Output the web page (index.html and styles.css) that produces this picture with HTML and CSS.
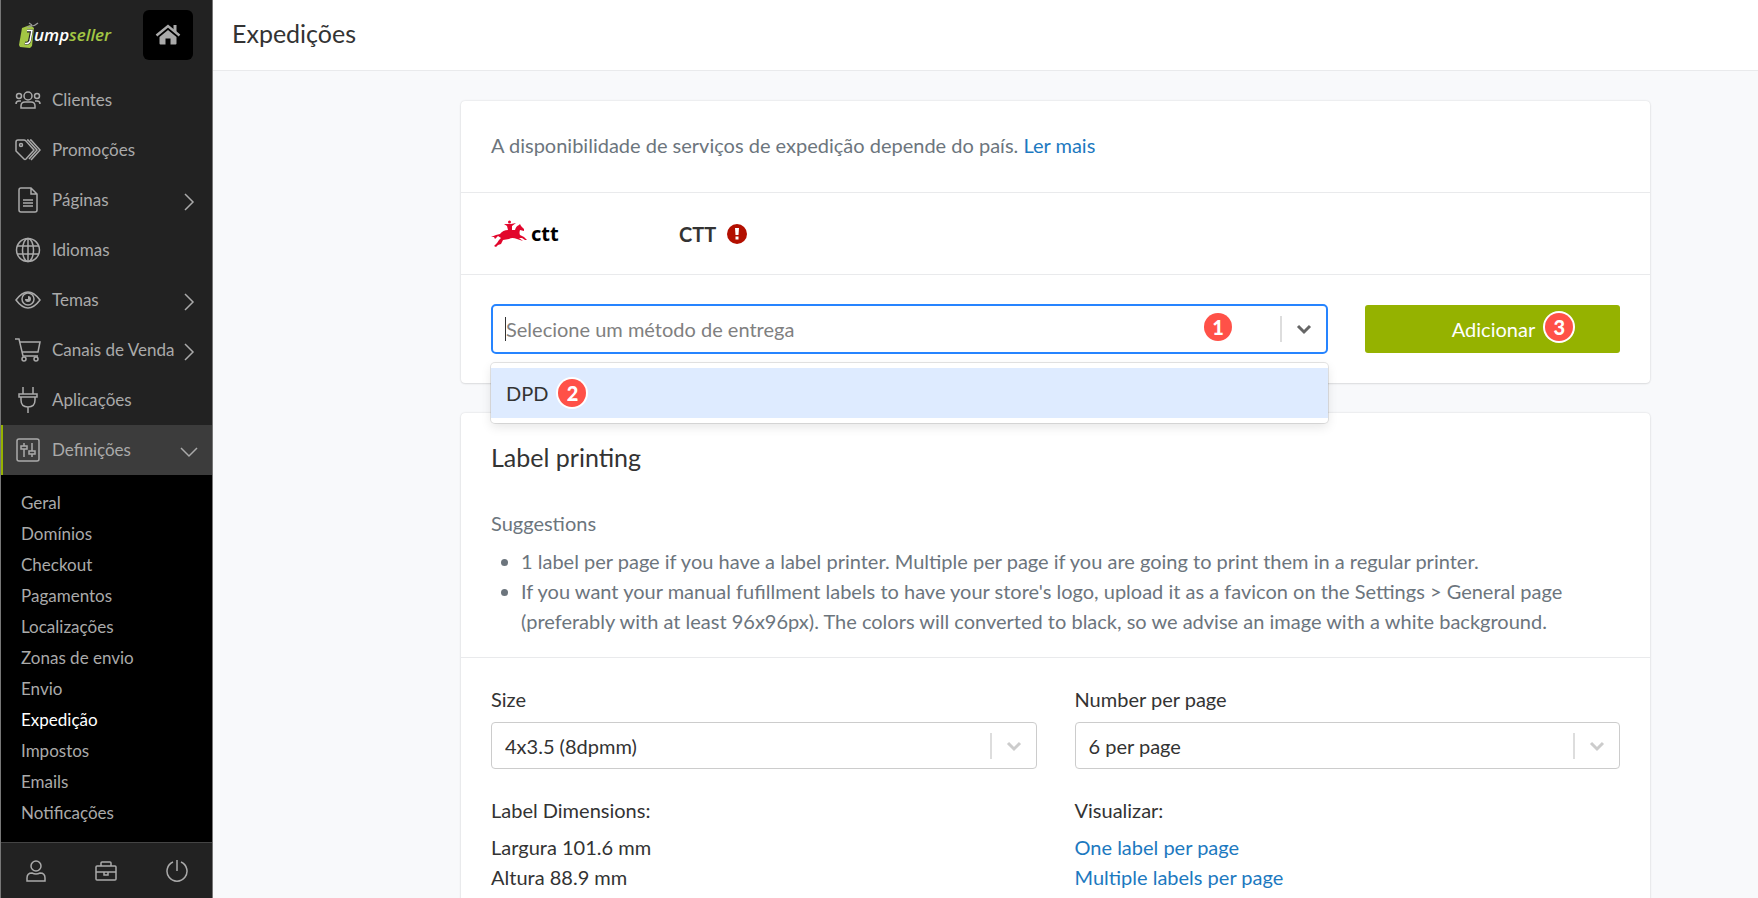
FILE: index.html
```html
<!DOCTYPE html>
<html lang="pt">

<head>
  <meta charset="UTF-8">
  <meta name="viewport" content="width=device-width, initial-scale=1.0">
  <title>Expedições</title>
  <link rel="stylesheet" href="styles.css">
</head>

<body>
  <!-- Sidebar -->
  <aside class="sidebar">
    <div class="sidebar-top">
      <a class="logo" href="#" aria-label="jumpseller">
        <svg class="logo-mark" viewBox="0 0 20 26" width="20" height="26" aria-hidden="true">
          <path d="M3 6 L11 3 L15 6 L13 24 L11 26 L1 25 L0 23 Z" fill="#a3c644"/>
          <path d="M8 9 H12.500 L10.500 19 Q9.500 22 6 21" fill="none" stroke="#222" stroke-width="3"/>
          <path d="M8 8.500 H13 L11 19 Q10 22 6 21.500" fill="none" stroke="#fff" stroke-width="1.500"/>
          <path d="M8 5 Q12 5 13 3 M12 4 Q16 4 19 1 M10 1 L13 3" fill="none" stroke="#999" stroke-width="1.200"/>
        </svg>
        <span class="logo-text">ump<b>seller</b></span>
      </a>
      <a class="home-btn" href="#" aria-label="Início">
        <svg viewBox="0 0 26 22" width="26" height="22" fill="#aaa">
          <path d="M13 6 L4.500 13 V19.500 Q4.500 20.500 5.500 20.500 H10.500 V14.500 H15.500 V20.500 H20.500 Q21.500 20.500 21.500 19.500 V13 Z"/>
          <path d="M1.500 11.500 L13 2 L24.500 11.500" fill="none" stroke="#aaa" stroke-width="2.500"/>
          <path d="M18.500 1 H21.500 V8.500 L18.500 6 Z"/>
        </svg>
      </a>
    </div>

    <nav class="menu">
      <a class="menu-item" href="#">
        <svg class="icon" viewBox="0 0 26 26">
          <circle cx="13" cy="9" r="4"/><circle cx="4" cy="9" r="2.500"/><circle cx="22" cy="9" r="2.500"/>
          <path d="M6 21 V19 Q6 15 10 15 H16 Q20 15 20 19 V21 H6 Z M1 17 Q1 14 4 14 H6 M25 17 Q25 14 22 14 H20"/>
        </svg>
        <span>Clientes</span>
      </a>
      <a class="menu-item" href="#">
        <svg class="icon" viewBox="0 0 26 26">
          <path d="M1 5 Q1 3 3 3 H9 Q10 3 11 4 L19 13 L11 22 Q10 23 9 22 L1 14 Z M12 3 H13 L22 13 L14 22 M15 3 H16 L25 13 L16 23"/><circle cx="6" cy="8" r="1.500"/>
        </svg>
        <span>Promoções</span>
      </a>
      <a class="menu-item" href="#">
        <svg class="icon" viewBox="0 0 26 26">
          <path d="M4 3 Q4 1 6 1 H16 L22 7 V23 Q22 25 20 25 H6 Q4 25 4 23 Z M16 1 V7 H22 M8 13 H18 M8 16 H18 M8 19 H18"/>
        </svg>
        <span>Páginas</span>
        <svg class="chevron" viewBox="0 0 18 18"><path d="M5 1 L13 9 L5 17"/></svg>
      </a>
      <a class="menu-item" href="#">
        <svg class="icon" viewBox="0 0 26 26">
          <circle cx="13" cy="13" r="11.500"/><ellipse cx="13" cy="13" rx="5.500" ry="11.500"/>
          <path d="M13 1 V25 M2 9 H24 M2 17 H24"/>
        </svg>
        <span>Idiomas</span>
      </a>
      <a class="menu-item" href="#">
        <svg class="icon" viewBox="0 0 26 26">
          <path d="M1 13 Q13 -3 25 13 Q13 29 1 13 Z"/><circle cx="13" cy="12" r="6"/>
          <path d="M13 9 A3 3 0 1 1 10 12 H13 Z" fill="#aaa" stroke="none"/>
        </svg>
        <span>Temas</span>
        <svg class="chevron" viewBox="0 0 18 18"><path d="M5 1 L13 9 L5 17"/></svg>
      </a>
      <a class="menu-item" href="#">
        <svg class="icon" viewBox="0 0 26 26">
          <path d="M0 2 H4 L8 19 H23 M5 5 H25 L23 15 H7"/><circle cx="9" cy="22" r="2"/><circle cx="21" cy="22" r="2"/>
        </svg>
        <span>Canais de Venda</span>
        <svg class="chevron" viewBox="0 0 18 18"><path d="M5 1 L13 9 L5 17"/></svg>
      </a>
      <a class="menu-item" href="#">
        <svg class="icon" viewBox="0 0 26 26">
          <path d="M8 0 V7 M18 0 V7 M4 7 H22 V10 H4 Z M6 10 V13 Q6 20 13 20 Q20 20 20 13 V10 M13 20 V26"/>
        </svg>
        <span>Aplicações</span>
      </a>
      <a class="menu-item menu-open" href="#">
        <svg class="icon" viewBox="0 0 26 26">
          <rect x="2" y="2" width="22" height="22" rx="2"/>
          <path d="M9 6 V9 M9 12 V20 M6 9 H12 V12 H6 Z M17 6 V14 M14 14 H20 V17 H14 Z M17 17 V20"/>
        </svg>
        <span>Definições</span>
        <svg class="chevron" viewBox="0 0 18 18"><path d="M1 5 L9 13 L17 5"/></svg>
      </a>
    </nav>

    <ul class="submenu">
      <li><a href="#">Geral</a></li>
      <li><a href="#">Domínios</a></li>
      <li><a href="#">Checkout</a></li>
      <li><a href="#">Pagamentos</a></li>
      <li><a href="#">Localizações</a></li>
      <li><a href="#">Zonas de envio</a></li>
      <li><a href="#">Envio</a></li>
      <li><a class="active" href="#">Expedição</a></li>
      <li><a href="#">Impostos</a></li>
      <li><a href="#">Emails</a></li>
      <li><a href="#">Notificações</a></li>
    </ul>

    <div class="sidebar-bottom">
      <button type="button" aria-label="Conta">
        <svg class="tool" viewBox="0 0 22 22"><circle cx="11" cy="6" r="5"/><path d="M2 21 V18 Q2 13 7 13 Q11 15 15 13 Q20 13 20 18 V21 Z"/></svg>
      </button>
      <button type="button" aria-label="Ferramentas">
        <svg class="tool" viewBox="0 0 22 22"><rect x="1" y="6" width="20" height="14" rx="1"/><path d="M6 6 V3 Q6 2 7 2 H15 Q16 2 16 3 V6 M1 12 H21 M9 12 V15 H13 V12"/></svg>
      </button>
      <button type="button" aria-label="Sair">
        <svg class="tool" viewBox="0 0 22 22"><path d="M11 0 V11 M7 2 A10 10 0 1 0 15 2"/></svg>
      </button>
    </div>
  </aside>

  <!-- Page -->
  <div class="page">
    <header class="page-header">
      <h1>Expedições</h1>
    </header>

    <div class="page-body">
      <main class="content">
        <section class="card">
          <div class="card-row intro">
            <p>A disponibilidade de serviços de expedição depende do país. <a href="#">Ler mais</a></p>
          </div>

          <div class="card-row carrier">
            <div class="carrier-logo">
              <svg viewBox="0 0 36 28" width="36" height="28" fill="#e2062c" aria-hidden="true">
                <circle cx="18.500" cy="2" r="1.500"/>
                <path d="M13 4 L17 4 L20 4 L25 3 L21 6 L21 10 L24 10 Q25 6 28 5 L29 4 L30 6 L33 9 L33 11 L29 10 Q28 13 29 15 L33 17 L36 20 L34 20 L31 18 L28 18 L32 21 L26 19 Q21 17 18 19 L12 20 L10 24 L7 25 L5 27 L3 26 L6 23 L8 20 L10 18 L7 16 L4 19 L3 17 L0 17 L5 15 L9 14 Q12 10 17 10 L16 6 Z"/>
              </svg>
              <span>ctt</span>
            </div>
            <strong class="carrier-name">CTT</strong>
            <svg class="alert" viewBox="0 0 20 20" width="20" height="20" aria-label="Aviso">
              <circle cx="10" cy="10" r="10" fill="#b30f00"/>
              <path d="M8 4 H12 L11.500 11 H8.500 Z M8.500 12.500 H11.500 V15.500 H8.500 Z" fill="#fff"/>
            </svg>
          </div>

          <div class="card-row add-row">
            <div class="combo">
              <div class="combo-control">
                <span class="caret"></span>
                <input type="text" role="combobox" aria-expanded="true" aria-controls="methods" aria-label="Método de entrega" placeholder="Selecione um método de entrega">
                <span class="badge badge-raised">1</span>
                <button class="arrow" type="button" aria-label="Abrir">
                  <svg viewBox="0 0 20 20" width="20" height="20"><path d="M4 7 L10 13 L16 7"/></svg>
                </button>
              </div>
              <ul class="combo-menu" id="methods" role="listbox">
                <li role="option" aria-selected="true">DPD <span class="badge">2</span></li>
              </ul>
            </div>
            <button class="add-btn" type="button">Adicionar <span class="badge badge-raised">3</span></button>
          </div>
        </section>

        <section class="card">
          <div class="card-row printing">
            <h2>Label printing</h2>
            <h3>Suggestions</h3>
            <ul>
              <li>1 label per page if you have a label printer. Multiple per page if you are going to print them in a regular printer.</li>
              <li>If you want your manual fufillment labels to have your store's logo, upload it as a favicon on the Settings &gt; General page (preferably with at least 96x96px). The colors will converted to black, so we advise an image with a white background.</li>
            </ul>
          </div>

          <div class="card-row options">
            <div class="field">
              <label for="size">Size</label>
              <div class="select-box">
                <select id="size">
                  <option>4x3.5 (8dpmm)</option>
                </select>
                <span class="arrow">
                  <svg viewBox="0 0 20 20" width="20" height="20"><path d="M4 7 L10 13 L16 7"/></svg>
                </span>
              </div>
              <h4>Label Dimensions:</h4>
              <p>Largura 101.6 mm</p>
              <p>Altura 88.9 mm</p>
            </div>
            <div class="field">
              <label for="per-page">Number per page</label>
              <div class="select-box">
                <select id="per-page">
                  <option>6 per page</option>
                </select>
                <span class="arrow">
                  <svg viewBox="0 0 20 20" width="20" height="20"><path d="M4 7 L10 13 L16 7"/></svg>
                </span>
              </div>
              <h4>Visualizar:</h4>
              <p><a href="#">One label per page</a></p>
              <p><a href="#">Multiple labels per page</a></p>
            </div>
          </div>
        </section>
      </main>
    </div>
  </div>
</body>

</html>
```
FILE: styles.css
```css
* {
  margin: 0;
  padding: 0;
  box-sizing: border-box;
}

body {
  display: flex;
  height: 100vh;
  background: #f8f9fb;
  color: #333;
  font-family: Lato, "Liberation Sans", sans-serif;
  font-size: 20px;
  line-height: 30px;
}

a {
  color: #1c79c0;
  text-decoration: none;
}

button,
input,
select {
  font: inherit;
  color: inherit;
  border: none;
  background: none;
}

ul {
  list-style: none;
}

/* Sidebar */
.sidebar {
  flex: none;
  width: 213px;
  display: flex;
  flex-direction: column;
  background: #222;
  border-left: 1px solid #777;
  border-right: 1px solid #777;
  color: #aaa;
  font-size: 17px;
}

.sidebar-top {
  display: flex;
  justify-content: space-between;
  align-items: center;
  height: 75px;
  padding: 0 19px 6px 18px;
}

.logo {
  display: flex;
  align-items: center;
}

.logo-mark {
  margin-right: -5px;
}

.logo-text {
  color: #fff;
  font-family: "Open Sans", sans-serif;
  font-size: 17px;
  font-style: italic;
  font-weight: 600;
}

.logo-text b {
  color: #a3c644;
  font-weight: 600;
}

.home-btn {
  display: flex;
  justify-content: center;
  align-items: center;
  width: 50px;
  height: 50px;
  background: #000;
  border-radius: 6px;
}

.menu-item {
  display: flex;
  align-items: center;
  height: 50px;
  padding: 0 14px;
  color: #aaa;
}

.menu-item span {
  flex: 1;
  white-space: nowrap;
}

.icon {
  flex: none;
  width: 26px;
  height: 26px;
  margin-right: 11px;
}

.icon,
.chevron,
.tool {
  fill: none;
  stroke: #aaa;
  stroke-width: 1.5;
}

.chevron {
  flex: none;
  width: 18px;
  height: 18px;
  margin-top: 3px;
  margin-left: -12px;
}

.menu-open {
  background: #3c3c3c;
  box-shadow: inset 2px 0 #95b200;
}

.submenu {
  flex: 1;
  padding: 12px 20px;
  background: #000;
}

.submenu a {
  display: block;
  color: #aaa;
  line-height: 31px;
}

.submenu .active {
  color: #fff;
}

.sidebar-bottom {
  display: flex;
  justify-content: space-around;
  align-items: center;
  height: 56px;
  border-top: 1px solid #444;
}

.sidebar-bottom button {
  display: flex;
  justify-content: center;
  align-items: center;
  width: 60px;
  height: 40px;
}

.tool {
  width: 22px;
  height: 22px;
}

/* Page */
.page {
  flex: 1;
  min-width: 0;
  overflow-y: auto;
  scrollbar-width: none;
}

.page-header {
  height: 71px;
  padding: 18px 19px;
  background: #fff;
  border-bottom: 1px solid #e9eaec;
}

h1,
h2 {
  font-size: 25px;
  font-weight: 400;
}

.page-body {
  padding-left: 140px;
}

.content {
  max-width: 1249px;
  margin: 0 auto;
  padding: 30px;
}

.card {
  margin-bottom: 30px;
  background: #fff;
  border-radius: 4px;
  box-shadow: 0 0 2px rgba(0, 0, 0, 0.15), 0 1px 2px rgba(0, 0, 0, 0.08);
}

.card-row {
  padding: 29px 30px;
}

.card-row + .card-row {
  border-top: 1px solid #e9eaec;
}

.intro {
  padding-bottom: 32px;
  color: #6c757d;
}

/* Carrier */
.carrier {
  display: flex;
  align-items: center;
  height: 82px;
}

.carrier-logo {
  display: flex;
  align-items: center;
  width: 188px;
  color: #000;
  font-family: "Noto Sans", sans-serif;
  font-weight: 700;
}

.carrier-logo span {
  margin-left: 4px;
}

.carrier-name {
  margin-right: 11px;
}

/* Delivery method combo */
.add-row {
  display: flex;
  align-items: center;
  gap: 37px;
}

.combo {
  position: relative;
  flex: 1;
}

.combo-control {
  display: flex;
  align-items: center;
  height: 50px;
  padding-left: 12px;
  border: 2px solid #2684ff;
  border-radius: 5px;
}

.combo-control input {
  flex: 1;
  min-width: 0;
  outline: none;
}

.combo-control input::placeholder {
  color: #808080;
  opacity: 1;
}

.combo-control .badge {
  margin-right: 48px;
}

.caret {
  width: 1px;
  height: 24px;
  background: #333;
}

.arrow {
  flex: none;
  display: flex;
  justify-content: center;
  align-items: center;
  width: 46px;
  height: 26px;
  border-left: 2px solid #ddd;
}

.arrow svg {
  fill: none;
  stroke: #666;
  stroke-width: 3;
}

.combo-menu {
  position: absolute;
  top: 59px;
  left: 0;
  right: 0;
  padding: 5px 0;
  background: #fff;
  border-radius: 4px;
  box-shadow: 0 0 0 1px rgba(0, 0, 0, 0.1), 0 4px 11px rgba(0, 0, 0, 0.1);
}

.combo-menu li {
  display: flex;
  align-items: center;
  gap: 10px;
  height: 50px;
  padding: 0 15px;
  background: #deebff;
}

.add-btn {
  display: flex;
  justify-content: center;
  align-items: center;
  gap: 10px;
  width: 255px;
  height: 48px;
  padding-left: 40px;
  background: #95b200;
  border-radius: 3px;
  color: #fff;
}

/* Numbered step badges */
.badge {
  width: 28px;
  height: 28px;
  border-radius: 50%;
  background: #ff5148;
  box-shadow: 0 0 0 2px #fff;
  color: #fff;
  font-weight: 900;
  line-height: 28px;
  text-align: center;
}

.badge-raised {
  margin-bottom: 4px;
}

/* Label printing */
.printing {
  padding-bottom: 21px;
}

.printing h2 {
  margin-bottom: 36px;
}

.printing h3 {
  margin-bottom: 8px;
  font-size: 20px;
  font-weight: 400;
}

.printing h3,
.printing ul {
  color: #6c757d;
}

.printing ul {
  padding-left: 30px;
  list-style: disc;
}

.options {
  display: grid;
  grid-template-columns: 1fr 1fr;
  gap: 38px;
  padding-top: 26px;
}

.field label {
  display: block;
  margin-bottom: 8px;
}

.field h4 {
  margin: 26px 0 7px;
  font-size: 20px;
  font-weight: 400;
}

.select-box {
  display: flex;
  align-items: center;
  height: 47px;
  border: 1px solid #ccc;
  border-radius: 4px;
}

.select-box select {
  flex: 1;
  appearance: none;
  height: 45px;
  padding-left: 13px;
}

.select-box .arrow svg {
  stroke: #ccc;
}
```
